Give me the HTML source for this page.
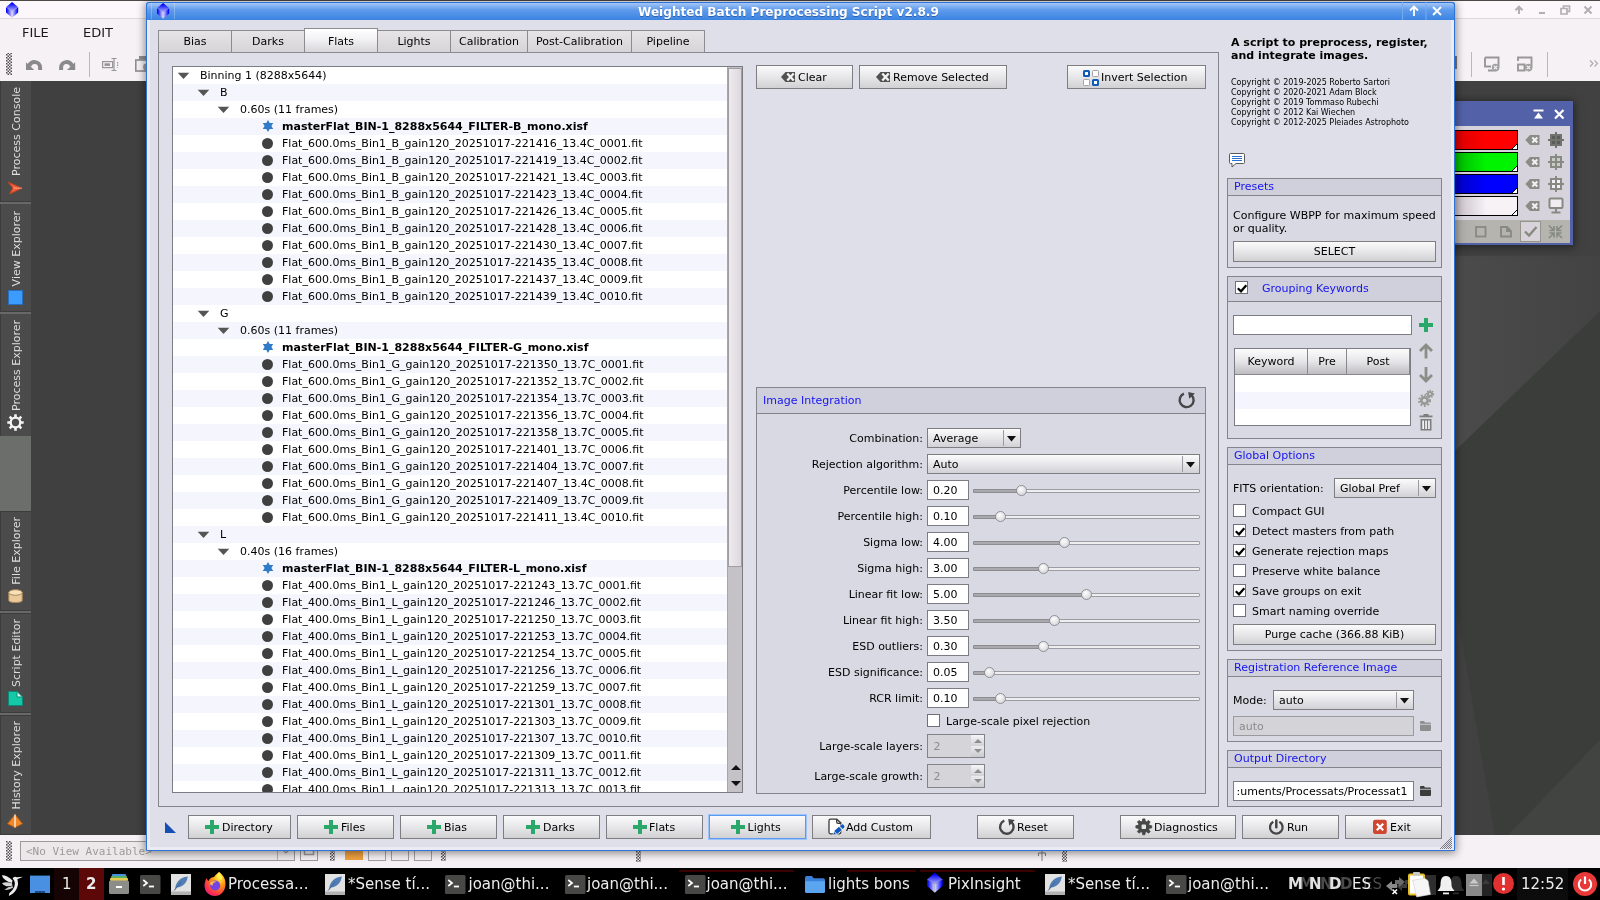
<!DOCTYPE html>
<html lang="en"><head><meta charset="utf-8"><title>Weighted Batch Preprocessing Script v2.8.9</title>
<style>

*{box-sizing:border-box;margin:0;padding:0}
html,body{width:1600px;height:900px;overflow:hidden}
body{position:relative;will-change:transform;background:#404040;font-family:"DejaVu Sans","Liberation Sans",sans-serif;font-size:11px;color:#000;line-height:1}
.a{position:absolute}
.t{position:absolute;white-space:pre;line-height:14px;height:14px;margin-top:1px}
svg{position:absolute;overflow:visible}
/* app */
#apptitle{left:0;top:0;width:1600px;height:19px;background:#fcf7fa;border-top:1px solid #4c4846;border-bottom:1px solid #dfd8dc}
#menubar{left:0;top:19px;width:1600px;height:29px;background:#f6f1f4}
#toolbar{left:0;top:48px;width:1600px;height:33px;background:#f6f1f4}
#sidebar{left:0;top:81px;width:31px;height:754px;background:#3c3c3c}
.stab{position:absolute;left:1px;width:30px;background:#4b4b4b}
.stab span{position:absolute;left:9px;bottom:25px;writing-mode:vertical-rl;transform:rotate(180deg);white-space:pre;font-size:11px;color:#dedede;line-height:14px;width:14px}
#appbottom{left:0;top:835px;width:1600px;height:33px;background:#f6f1f4}
#taskbar{left:0;top:868px;width:1600px;height:32px;background:#000;color:#e8e8e8;font-size:15px}
/* dialog */
#dlg{left:146px;top:2px;width:1309px;height:849px;background:#dfdfe9;border:1px solid #2e74d6;border-radius:3px 3px 0 0;box-shadow:inset 0 0 0 3px #ebebf5,0 1px 9px 1px rgba(0,0,0,.45)}
#dlgtitle{left:146px;top:2px;width:1309px;height:18px;border-radius:3px 3px 0 0;border:1px solid #2e74d6;border-bottom:none;background:linear-gradient(#a4c6f7,#5f9bec 40%,#3a84e2);color:#fff;font-weight:bold;font-size:12px}
.btn{position:absolute;height:24px;border:1px solid #7e7e82;background:linear-gradient(#fbfafb,#e9e8ea 45%,#d1d0d3)}
.btn .t{top:4px}
.grp{position:absolute;border:1px solid #84848b;background:#d9d9e3}
.grph{position:absolute;left:0;top:0;right:0;border-bottom:1px solid #84848b;background:#d0d0dc}
.blue{color:#1414f0}
.inp{position:absolute;background:#fff;border:1px solid #7c7c84}
.cb{position:absolute;width:13px;height:13px;background:#fff;border:1px solid #70707a}
.combo{position:absolute;border:1px solid #7e7e82;background:linear-gradient(#fbfbfb,#e9e9ec 45%,#d2d2d6)}
.tab{position:absolute;top:30px;height:23px;border:1px solid #8c8c90;background:linear-gradient(#e6e4e7,#d6d4d7);text-align:center;line-height:21px}

</style></head>
<body>
<div class="a" id="apptitle"></div>
<svg class="a" style="left:5.9px;top:2px" width="12.200" height="15.800" viewBox="0 0 12.200 15.800"><defs><linearGradient id="pta" x1="0" y1="0" x2="0" y2="1"><stop offset="0.150" stop-color="#0000ff"/><stop offset="1" stop-color="#b8b8f6"/></linearGradient><linearGradient id="pla" x1="0" y1="0" x2="1" y2="0"><stop offset="0.100" stop-color="#0808ff"/><stop offset="1" stop-color="#dcdcfa"/></linearGradient><linearGradient id="pra" x1="0" y1="0" x2="1" y2="0"><stop offset="0" stop-color="#dcdcfa"/><stop offset="0.900" stop-color="#0808ff"/></linearGradient></defs><path d="M0 5.250 L6.100 9 V15.750 L0 10.500 Z" fill="url(#pla)"/><path d="M12.200 5.250 L6.100 9 V15.750 L12.200 10.500 Z" fill="url(#pra)"/><path d="M6.100 0 L12.200 5.250 L6.100 9.300 L0 5.250 Z" fill="url(#pta)"/></svg>
<svg class="a" style="left:1510px;top:2px" width="90" height="16" viewBox="0 0 90 16" fill="none" stroke="#b2aeb1" stroke-width="2">
<path d="M9 12 V5.500 M5.500 8.200 L9 4.700 L12.500 8.200" stroke-width="2.100"/>
<path d="M29 11 H35"/>
<path d="M51 6.500 H57 V12 H51 Z M53.500 6 V4 H59.500 V9.500 H57.500" stroke-width="1.700"/>
<path d="M74.500 4.500 L81.500 11.500 M81.500 4.500 L74.500 11.500"/></svg>
<div class="a" id="menubar"></div>
<div class="t" style="left:22px;top:24px;font-size:13px;line-height:15px;color:#1a1a1a">FILE</div>
<div class="t" style="left:83px;top:24px;font-size:13px;line-height:15px;color:#1a1a1a">EDIT</div>
<div class="a" id="toolbar"></div>
<svg class="a" style="left:0;top:48px" width="146" height="33" viewBox="0 0 146 33">
<defs><pattern id="grip" width="3" height="3" patternUnits="userSpaceOnUse"><rect width="1.500" height="1.500" fill="#505050"/><rect x="1.500" y="1.500" width="1.500" height="1.500" fill="#505050"/></pattern></defs>
<rect x="6" y="5" width="6" height="22" fill="url(#grip)"/>
<path d="M40.100 22 V19.600 A5.600 5.600 0 0 0 29.100 18.200" stroke="#8a8a8a" stroke-width="4" fill="none"/><path d="M26 14.300 V22 H34.300 Z" fill="#8a8a8a"/>
<path d="M61.100 22 V19.600 A5.600 5.600 0 0 1 72.100 18.200" stroke="#8a8a8a" stroke-width="4" fill="none"/><path d="M75.200 14.300 V22 H66.900 Z" fill="#8a8a8a"/>
<rect x="89" y="4" width="1" height="25" fill="#bcb8ba"/>
<g fill="none" stroke="#969696" stroke-width="1.200"><rect x="102.600" y="13.600" width="10" height="6"/><rect x="104.500" y="15.300" width="5.500" height="2.600" fill="#969696" stroke="none"/><path d="M114 10.500 V22.500 M111.500 10.500 H116.500 M111.500 22.500 H116.500"/><path d="M117.600 14 V19.500" stroke-dasharray="1.500 1"/></g>
<g fill="none" stroke="#8e8e8e" stroke-width="1.600"><rect x="135.800" y="12" width="14" height="11"/><rect x="139" y="8" width="10" height="3.500" fill="#8e8e8e" stroke="none"/><circle cx="146.500" cy="19" r="3.500" fill="#a0a0a0" stroke="none"/></g>
</svg>
<svg class="a" style="left:1455px;top:48px" width="145" height="33" viewBox="0 0 145 33" fill="none" stroke="#989898" stroke-width="1.900">
<rect x="16" y="4" width="1" height="25" fill="#bcb8ba" stroke="none"/>
<rect x="92" y="4" width="1" height="25" fill="#bcb8ba" stroke="none"/>
<rect x="0" y="8" width="2" height="13" fill="#7c7c7c" stroke="none"/>
<path d="M30 9.500 H43.500 V19 Q43.500 22.500 40 22.500 H33 M30 9.500 V18.500 H36"/><circle cx="40.500" cy="19.500" r="3.700" fill="#a2a2a2" stroke="none"/><path d="M38.900 17.900 L42.100 21.100 M42.100 17.900 L38.900 21.100" stroke="#f6f1f4" stroke-width="1.200"/>
<path d="M63 13 V9.500 H76.500 V19 Q76.500 22.500 73 22.500"/><rect x="63" y="16.500" width="6.500" height="6"/><circle cx="73.500" cy="19.500" r="3.700" fill="#a2a2a2" stroke="none"/><path d="M71.900 17.900 L75.100 21.100 M75.100 17.900 L71.900 21.100" stroke="#f6f1f4" stroke-width="1.200"/>
<path d="M135 12.500 L138 15.500 L135 18.500 M139.500 12.500 L142.500 15.500 L139.500 18.500" stroke="#aaa" stroke-width="1.100"/>
</svg>
<svg class="a" style="left:1455px;top:81px" width="145" height="754" viewBox="0 0 145 754"><defs><linearGradient id="wsg" x1="0" y1="0" x2="1" y2="0"><stop offset="0" stop-color="#4b4b4c"/><stop offset="1" stop-color="#434344"/></linearGradient></defs>
<rect x="0" y="0" width="145" height="754" fill="#414141"/>
<path d="M0 175 H145 V230 L0 370 Z" fill="url(#wsg)"/>
<path d="M145 230 L0 370 V520 L40 754 H145 Z" fill="#3b3d3b"/>
<path d="M145 659 L53 754 H145 Z" fill="#424442"/>
</svg>
<div class="a" id="sidebar"></div>
<div class="stab" style="top:81px;height:120px"><span>Process Console</span><svg style="left:6px;top:100px" width="16" height="14" viewBox="0 0 16 14"><path d="M1 1 L15 7.200 L2.500 13 L6 7 Z" fill="#f0603a" stroke="#c8401c" stroke-width="1" stroke-linejoin="round"/><path d="M6 7 L15 7.200" stroke="#ffd0c0" stroke-width=".8" opacity=".7"/></svg></div>
<div class="a" style="left:0;top:202px;width:31px;height:2px;background:#686868"></div>
<div class="stab" style="top:204px;height:107px"><span>View Explorer</span><svg style="left:7px;top:86px" width="15" height="15" viewBox="0 0 15 15"><rect x=".5" y=".5" width="14" height="14" fill="#3c9cfc" stroke="#2a6cc0"/></svg></div>
<div class="a" style="left:0;top:312px;width:31px;height:2px;background:#686868"></div>
<div class="stab" style="top:314px;height:122px"><span>Process Explorer</span><svg style="left:6px;top:100px" width="17" height="17" viewBox="0 0 17 17"><circle cx="8.500" cy="8.500" r="4.800" fill="none" stroke="#f4f4f4" stroke-width="2.300"/><g stroke="#f4f4f4" stroke-width="2.600"><path d="M8.500 0.300 V3 M8.500 14 V16.700 M0.300 8.500 H3 M14 8.500 H16.700 M2.700 2.700 L4.600 4.600 M12.400 12.400 L14.300 14.300 M2.700 14.300 L4.600 12.400 M12.400 4.600 L14.300 2.700"/></g></svg></div>
<div class="a" style="left:0;top:436px;width:31px;height:75px;background:#6c6e6c"></div>
<div class="stab" style="top:512px;height:98px"><span>File Explorer</span><svg style="left:7px;top:77px" width="15" height="15" viewBox="0 0 15 15"><path d="M.8 3.500 V11.500 C.8 14.200 14.200 14.200 14.200 11.500 V3.500 Z" fill="#ecc99a" stroke="#a88858"/><ellipse cx="7.500" cy="3.500" rx="6.700" ry="2.800" fill="#f8e0b8" stroke="#a88858"/></svg></div>
<div class="a" style="left:0;top:611px;width:31px;height:2px;background:#686868"></div>
<div class="stab" style="top:614px;height:98px"><span>Script Editor</span><svg style="left:7px;top:77px" width="15" height="15" viewBox="0 0 15 15"><path d="M.5 .5 H9 L14.500 6 V14.500 H.5 Z" fill="#14c8a8" stroke="#0a8a74"/><path d="M9 .5 V6 H14.500 Z" fill="#e0fff6" stroke="#0a8a74"/></svg></div>
<div class="a" style="left:0;top:713px;width:31px;height:2px;background:#686868"></div>
<div class="stab" style="top:716px;height:118px"><span>History Explorer</span><svg style="left:6px;top:98px" width="16" height="14" viewBox="0 0 16 14"><path d="M8 .5 L15.500 9.800 L8 13.500 L.5 9.800 Z" fill="#f08828" stroke="#b85c10"/><path d="M8 .5 V13.500" stroke="#fff" stroke-width="1.200"/></svg></div>
<div class="a" id="appbottom"></div>
<svg class="a" style="left:0;top:835px" width="460" height="33" viewBox="0 0 460 33"><rect x="6" y="6" width="6" height="20" fill="url(#grip)"/>
<rect x="20.500" y="6.500" width="274" height="19" fill="#ece8ea" stroke="#9a9a9a"/>
<path d="M277.500 7 V25" stroke="#b0b0b0"/><path d="M282 14 L286 18 L290 14" fill="none" stroke="#9a9a9a" stroke-width="1.2"/>
<rect x="300.500" y="6.500" width="17" height="19" fill="none" stroke="#9a9a9a"/><rect x="304.500" y="10.500" width="9" height="9" fill="none" stroke="#9a9a9a" stroke-width="1.5"/>
<rect x="330" y="8" width="5" height="18" fill="url(#grip)"/>
<rect x="345" y="8" width="18" height="17" fill="#f0a040"/>
<rect x="368.500" y="8.500" width="17" height="17" fill="none" stroke="#a0a0a0"/><rect x="391.500" y="8.500" width="17" height="17" fill="none" stroke="#a0a0a0"/><rect x="414.500" y="8.500" width="17" height="17" fill="none" stroke="#a0a0a0"/>
<rect x="441" y="8" width="5" height="18" fill="url(#grip)"/></svg>
<div class="t" style="left:26px;top:844px;font-family:'DejaVu Sans Mono','Liberation Mono',monospace;font-size:11px;color:#9a9a9a">&lt;No View Available&gt;</div>
<svg class="a" style="left:1036px;top:851px" width="40" height="12" viewBox="0 0 40 12"><path d="M6 0 V10 M2.500 2 H9.500 M2.500 2 V5 M9.500 2 V5" stroke="#808080" fill="none"/><rect x="26" y="0" width="5" height="11" fill="url(#grip)"/></svg>
<svg class="a" style="left:636px;top:851px" width="6" height="11" viewBox="0 0 6 11"><rect width="5" height="11" fill="url(#grip)"/></svg>
<div class="a" style="left:1440px;top:101px;width:133px;height:144px;background:#5361a8;box-shadow:0 1px 8px 1px rgba(0,0,0,.5)"></div>
<div class="a" style="left:1440px;top:126px;width:130px;height:94px;background:#d7d3dc"></div>
<div class="a" style="left:1440px;top:220px;width:130px;height:23px;background:linear-gradient(90deg,#a8a6a2 1%,#b6b4af 30%)"></div>
<div class="a" style="left:1440px;top:130px;width:78px;height:20px;background:linear-gradient(90deg,#d80000 18%,#ff0000 60%);border:1px solid #000;border-left:none"></div>
<svg class="a" style="left:1512px;top:144px" width="5" height="5" viewBox="0 0 5 5"><path d="M5 0 V5 H0 Z" fill="#fff"/><path d="M0 5 L5 0" stroke="#000" stroke-width="1"/></svg>
<svg class="a" style="left:1525px;top:135px" width="15" height="10" viewBox="0 0 15 10"><path d="M5 0 H14.500 V10 H5 L.3 5 Z" fill="#8a8c86"/><path d="M7.300 2.500 L12.300 7.500 M12.300 2.500 L7.300 7.500" stroke="#f4f0f6" stroke-width="2"/></svg>
<div class="a" style="left:1440px;top:152px;width:78px;height:20px;background:linear-gradient(90deg,#00b400 18%,#00f400 60%);border:1px solid #000;border-left:none"></div>
<svg class="a" style="left:1512px;top:166px" width="5" height="5" viewBox="0 0 5 5"><path d="M5 0 V5 H0 Z" fill="#fff"/><path d="M0 5 L5 0" stroke="#000" stroke-width="1"/></svg>
<svg class="a" style="left:1525px;top:157px" width="15" height="10" viewBox="0 0 15 10"><path d="M5 0 H14.500 V10 H5 L.3 5 Z" fill="#8a8c86"/><path d="M7.300 2.500 L12.300 7.500 M12.300 2.500 L7.300 7.500" stroke="#f4f0f6" stroke-width="2"/></svg>
<div class="a" style="left:1440px;top:174px;width:78px;height:20px;background:linear-gradient(90deg,#0000c0 18%,#0000ff 60%);border:1px solid #000;border-left:none"></div>
<svg class="a" style="left:1512px;top:188px" width="5" height="5" viewBox="0 0 5 5"><path d="M5 0 V5 H0 Z" fill="#fff"/><path d="M0 5 L5 0" stroke="#000" stroke-width="1"/></svg>
<svg class="a" style="left:1525px;top:179px" width="15" height="10" viewBox="0 0 15 10"><path d="M5 0 H14.500 V10 H5 L.3 5 Z" fill="#8a8c86"/><path d="M7.300 2.500 L12.300 7.500 M12.300 2.500 L7.300 7.500" stroke="#f4f0f6" stroke-width="2"/></svg>
<div class="a" style="left:1440px;top:196px;width:78px;height:20px;background:linear-gradient(90deg,#c4bcc4 18%,#f6f2f6 60%);border:1px solid #000;border-left:none"></div>
<svg class="a" style="left:1512px;top:210px" width="5" height="5" viewBox="0 0 5 5"><path d="M5 0 V5 H0 Z" fill="#fff"/><path d="M0 5 L5 0" stroke="#000" stroke-width="1"/></svg>
<svg class="a" style="left:1525px;top:201px" width="15" height="10" viewBox="0 0 15 10"><path d="M5 0 H14.500 V10 H5 L.3 5 Z" fill="#8a8c86"/><path d="M7.300 2.500 L12.300 7.500 M12.300 2.500 L7.300 7.500" stroke="#f4f0f6" stroke-width="2"/></svg>
<svg class="a" style="left:1548px;top:131px" width="16" height="86" viewBox="0 0 16 86" fill="none">
<g stroke="#70746c" stroke-width="2"><rect x="3" y="4" width="10" height="10" fill="#5c5c5c"/><path d="M8 1 V17 M0 9 H16"/></g>
<g stroke="#868a82" stroke-width="2"><rect x="3" y="26" width="10" height="10" fill="#c8ccc4"/><path d="M8 23 V39 M0 31 H16"/></g>
<g stroke="#868a82" stroke-width="2"><rect x="3" y="48" width="10" height="10" fill="#f4f0f6"/><path d="M8 45 V61 M0 53 H16"/></g>
<g stroke="#868a82" stroke-width="2"><rect x="1.500" y="67.500" width="13" height="9.500" rx="1" fill="#f0ecf2"/><path d="M8 77 V81 M3.500 81.500 H12.500"/></g>
</svg>
<svg class="a" style="left:1530px;top:107px" width="38" height="14" viewBox="0 0 38 14" fill="none" stroke="#fff" stroke-width="2"><path d="M3.500 3.500 H13.500" /><path d="M8.500 5.500 L13 11.500 H4 Z" fill="#fff" stroke="none"/><path d="M25 3 L33.500 11.500 M33.500 3 L25 11.500" stroke-width="2.200"/></svg>
<svg class="a" style="left:1470px;top:221px" width="100" height="22" viewBox="0 0 100 22" fill="none" stroke="#868a80" stroke-width="1.800">
<rect x="6" y="6" width="9.500" height="9.500"/>
<path d="M31 6 H37 L41 10 V15.500 H31 Z M37 6 V10 H41"/>
<rect x="50.500" y="0.500" width="20" height="20" fill="#d8d2da" stroke="#94968e" stroke-width="1"/>
<path d="M55 10.500 L59 14.500 L66.500 6" stroke-width="2.400"/>
<path d="M79 4.500 L83.500 9 M84 5 V9.500 H79.500 M92 4.500 L87.500 9 M87 5 V9.500 H91.500 M79 17 L83.500 12.500 M84 16.500 V12 H79.500 M92 17 L87.500 12.500 M87 16.500 V12 H91.500" stroke-width="1.600"/>
</svg>
<div class="a" id="dlg"></div>
<div class="a" id="dlgtitle"></div>
<div class="a" style="left:151px;top:3px;width:1px;height:16px;background:rgba(255,255,255,.25)"></div><div class="a" style="left:174px;top:3px;width:1px;height:16px;background:rgba(255,255,255,.25)"></div>
<svg class="a" style="left:157px;top:2.8px" width="12.200" height="15.800" viewBox="0 0 12.200 15.800"><defs><linearGradient id="ptb" x1="0" y1="0" x2="0" y2="1"><stop offset="0.150" stop-color="#0000ff"/><stop offset="1" stop-color="#b8b8f6"/></linearGradient><linearGradient id="plb" x1="0" y1="0" x2="1" y2="0"><stop offset="0.100" stop-color="#0808ff"/><stop offset="1" stop-color="#dcdcfa"/></linearGradient><linearGradient id="prb" x1="0" y1="0" x2="1" y2="0"><stop offset="0" stop-color="#dcdcfa"/><stop offset="0.900" stop-color="#0808ff"/></linearGradient></defs><path d="M0 5.250 L6.100 9 V15.750 L0 10.500 Z" fill="url(#plb)"/><path d="M12.200 5.250 L6.100 9 V15.750 L12.200 10.500 Z" fill="url(#prb)"/><path d="M6.100 0 L12.200 5.250 L6.100 9.300 L0 5.250 Z" fill="url(#ptb)"/></svg>
<div class="t" style="left:638px;top:4px;font-size:12.1px;font-weight:bold;color:#fff;text-shadow:0 1px 0 rgba(30,60,120,.55);line-height:15px">Weighted Batch Preprocessing Script v2.8.9</div>
<svg class="a" style="left:1402px;top:2px" width="52" height="18" viewBox="0 0 52 18" fill="none" stroke="#fff" stroke-width="1.8">
<path d="M.5 0 V18 M24 0 V18" stroke="#78acf0" stroke-width="1"/>
<path d="M12 14 V5 M8 8.500 L12 4.500 L16 8.500"/>
<path d="M31 5 L39 13 M39 5 L31 13"/></svg>
<div class="a" style="left:158px;top:52px;width:1061px;height:755px;border:1px solid #84848b;border-top:none"></div>
<div class="a" style="left:158px;top:52px;width:1061px;height:1px;background:#84848b"></div>
<div class="tab" style="left:158px;width:74px">Bias</div>
<div class="tab" style="left:231px;width:74px">Darks</div>
<div class="tab" style="left:304px;width:74px;top:28px;height:25px;line-height:25px;background:linear-gradient(#fff,#f2f1f3 45%,#d8d6d9)">Flats</div>
<div class="tab" style="left:377px;width:74px">Lights</div>
<div class="tab" style="left:450px;width:78px">Calibration</div>
<div class="tab" style="left:527px;width:105px">Post-Calibration</div>
<div class="tab" style="left:631px;width:74px">Pipeline</div>
<div class="a" style="left:172px;top:66px;width:571px;height:727px;background:#fff;border:1px solid #7c7c84;overflow:hidden" id="tree">
<svg style="left:5px;top:5px" width="11" height="7" viewBox="0 0 11 7"><path d="M-.3 .8 H11.300 L5.500 7 Z" fill="#555"/></svg>
<div class="t" style="left:27px;top:1px">Binning 1 (8288x5644)</div>
<div class="a" style="left:0;top:17px;width:554px;height:17px;background:#f5f5fd"></div>
<svg style="left:25px;top:22px" width="11" height="7" viewBox="0 0 11 7"><path d="M-.3 .8 H11.300 L5.500 7 Z" fill="#555"/></svg>
<div class="t" style="left:47px;top:18px">B</div>
<svg style="left:45px;top:39px" width="11" height="7" viewBox="0 0 11 7"><path d="M-.3 .8 H11.300 L5.500 7 Z" fill="#555"/></svg>
<div class="t" style="left:67px;top:35px">0.60s (11 frames)</div>
<div class="a" style="left:0;top:51px;width:554px;height:17px;background:#f5f5fd"></div>
<svg style="left:89px;top:53.2px" width="12" height="12" viewBox="0 0 12 12"><path d="M6 0 L7.700 3.100 L11.200 3 L9.400 6 L11.200 9 L7.700 8.900 L6 12 L4.300 8.900 L.8 9 L2.600 6 L.8 3 L4.300 3.100 Z" fill="#2f7bc8"/></svg>
<div class="t" style="left:109px;top:52px;font-weight:bold">masterFlat_BIN-1_8288x5644_FILTER-B_mono.xisf</div>
<div class="a" style="left:89px;top:70.5px;width:11.4px;height:11.4px;border-radius:50%;background:#404040"></div>
<div class="t" style="left:109px;top:69px">Flat_600.0ms_Bin1_B_gain120_20251017-221416_13.4C_0001.fit</div>
<div class="a" style="left:0;top:85px;width:554px;height:17px;background:#f5f5fd"></div>
<div class="a" style="left:89px;top:87.5px;width:11.4px;height:11.4px;border-radius:50%;background:#404040"></div>
<div class="t" style="left:109px;top:86px">Flat_600.0ms_Bin1_B_gain120_20251017-221419_13.4C_0002.fit</div>
<div class="a" style="left:89px;top:104.5px;width:11.4px;height:11.4px;border-radius:50%;background:#404040"></div>
<div class="t" style="left:109px;top:103px">Flat_600.0ms_Bin1_B_gain120_20251017-221421_13.4C_0003.fit</div>
<div class="a" style="left:0;top:119px;width:554px;height:17px;background:#f5f5fd"></div>
<div class="a" style="left:89px;top:121.5px;width:11.4px;height:11.4px;border-radius:50%;background:#404040"></div>
<div class="t" style="left:109px;top:120px">Flat_600.0ms_Bin1_B_gain120_20251017-221423_13.4C_0004.fit</div>
<div class="a" style="left:89px;top:138.5px;width:11.4px;height:11.4px;border-radius:50%;background:#404040"></div>
<div class="t" style="left:109px;top:137px">Flat_600.0ms_Bin1_B_gain120_20251017-221426_13.4C_0005.fit</div>
<div class="a" style="left:0;top:153px;width:554px;height:17px;background:#f5f5fd"></div>
<div class="a" style="left:89px;top:155.5px;width:11.4px;height:11.4px;border-radius:50%;background:#404040"></div>
<div class="t" style="left:109px;top:154px">Flat_600.0ms_Bin1_B_gain120_20251017-221428_13.4C_0006.fit</div>
<div class="a" style="left:89px;top:172.5px;width:11.4px;height:11.4px;border-radius:50%;background:#404040"></div>
<div class="t" style="left:109px;top:171px">Flat_600.0ms_Bin1_B_gain120_20251017-221430_13.4C_0007.fit</div>
<div class="a" style="left:0;top:187px;width:554px;height:17px;background:#f5f5fd"></div>
<div class="a" style="left:89px;top:189.5px;width:11.4px;height:11.4px;border-radius:50%;background:#404040"></div>
<div class="t" style="left:109px;top:188px">Flat_600.0ms_Bin1_B_gain120_20251017-221435_13.4C_0008.fit</div>
<div class="a" style="left:89px;top:206.5px;width:11.4px;height:11.4px;border-radius:50%;background:#404040"></div>
<div class="t" style="left:109px;top:205px">Flat_600.0ms_Bin1_B_gain120_20251017-221437_13.4C_0009.fit</div>
<div class="a" style="left:0;top:221px;width:554px;height:17px;background:#f5f5fd"></div>
<div class="a" style="left:89px;top:223.5px;width:11.4px;height:11.4px;border-radius:50%;background:#404040"></div>
<div class="t" style="left:109px;top:222px">Flat_600.0ms_Bin1_B_gain120_20251017-221439_13.4C_0010.fit</div>
<svg style="left:25px;top:243px" width="11" height="7" viewBox="0 0 11 7"><path d="M-.3 .8 H11.300 L5.500 7 Z" fill="#555"/></svg>
<div class="t" style="left:47px;top:239px">G</div>
<div class="a" style="left:0;top:255px;width:554px;height:17px;background:#f5f5fd"></div>
<svg style="left:45px;top:260px" width="11" height="7" viewBox="0 0 11 7"><path d="M-.3 .8 H11.300 L5.500 7 Z" fill="#555"/></svg>
<div class="t" style="left:67px;top:256px">0.60s (11 frames)</div>
<svg style="left:89px;top:274.2px" width="12" height="12" viewBox="0 0 12 12"><path d="M6 0 L7.700 3.100 L11.200 3 L9.400 6 L11.200 9 L7.700 8.900 L6 12 L4.300 8.900 L.8 9 L2.600 6 L.8 3 L4.300 3.100 Z" fill="#2f7bc8"/></svg>
<div class="t" style="left:109px;top:273px;font-weight:bold">masterFlat_BIN-1_8288x5644_FILTER-G_mono.xisf</div>
<div class="a" style="left:0;top:289px;width:554px;height:17px;background:#f5f5fd"></div>
<div class="a" style="left:89px;top:291.5px;width:11.4px;height:11.4px;border-radius:50%;background:#404040"></div>
<div class="t" style="left:109px;top:290px">Flat_600.0ms_Bin1_G_gain120_20251017-221350_13.7C_0001.fit</div>
<div class="a" style="left:89px;top:308.5px;width:11.4px;height:11.4px;border-radius:50%;background:#404040"></div>
<div class="t" style="left:109px;top:307px">Flat_600.0ms_Bin1_G_gain120_20251017-221352_13.7C_0002.fit</div>
<div class="a" style="left:0;top:323px;width:554px;height:17px;background:#f5f5fd"></div>
<div class="a" style="left:89px;top:325.5px;width:11.4px;height:11.4px;border-radius:50%;background:#404040"></div>
<div class="t" style="left:109px;top:324px">Flat_600.0ms_Bin1_G_gain120_20251017-221354_13.7C_0003.fit</div>
<div class="a" style="left:89px;top:342.5px;width:11.4px;height:11.4px;border-radius:50%;background:#404040"></div>
<div class="t" style="left:109px;top:341px">Flat_600.0ms_Bin1_G_gain120_20251017-221356_13.7C_0004.fit</div>
<div class="a" style="left:0;top:357px;width:554px;height:17px;background:#f5f5fd"></div>
<div class="a" style="left:89px;top:359.5px;width:11.4px;height:11.4px;border-radius:50%;background:#404040"></div>
<div class="t" style="left:109px;top:358px">Flat_600.0ms_Bin1_G_gain120_20251017-221358_13.7C_0005.fit</div>
<div class="a" style="left:89px;top:376.5px;width:11.4px;height:11.4px;border-radius:50%;background:#404040"></div>
<div class="t" style="left:109px;top:375px">Flat_600.0ms_Bin1_G_gain120_20251017-221401_13.7C_0006.fit</div>
<div class="a" style="left:0;top:391px;width:554px;height:17px;background:#f5f5fd"></div>
<div class="a" style="left:89px;top:393.5px;width:11.4px;height:11.4px;border-radius:50%;background:#404040"></div>
<div class="t" style="left:109px;top:392px">Flat_600.0ms_Bin1_G_gain120_20251017-221404_13.7C_0007.fit</div>
<div class="a" style="left:89px;top:410.5px;width:11.4px;height:11.4px;border-radius:50%;background:#404040"></div>
<div class="t" style="left:109px;top:409px">Flat_600.0ms_Bin1_G_gain120_20251017-221407_13.4C_0008.fit</div>
<div class="a" style="left:0;top:425px;width:554px;height:17px;background:#f5f5fd"></div>
<div class="a" style="left:89px;top:427.5px;width:11.4px;height:11.4px;border-radius:50%;background:#404040"></div>
<div class="t" style="left:109px;top:426px">Flat_600.0ms_Bin1_G_gain120_20251017-221409_13.7C_0009.fit</div>
<div class="a" style="left:89px;top:444.5px;width:11.4px;height:11.4px;border-radius:50%;background:#404040"></div>
<div class="t" style="left:109px;top:443px">Flat_600.0ms_Bin1_G_gain120_20251017-221411_13.4C_0010.fit</div>
<div class="a" style="left:0;top:459px;width:554px;height:17px;background:#f5f5fd"></div>
<svg style="left:25px;top:464px" width="11" height="7" viewBox="0 0 11 7"><path d="M-.3 .8 H11.300 L5.500 7 Z" fill="#555"/></svg>
<div class="t" style="left:47px;top:460px">L</div>
<svg style="left:45px;top:481px" width="11" height="7" viewBox="0 0 11 7"><path d="M-.3 .8 H11.300 L5.500 7 Z" fill="#555"/></svg>
<div class="t" style="left:67px;top:477px">0.40s (16 frames)</div>
<div class="a" style="left:0;top:493px;width:554px;height:17px;background:#f5f5fd"></div>
<svg style="left:89px;top:495.2px" width="12" height="12" viewBox="0 0 12 12"><path d="M6 0 L7.700 3.100 L11.200 3 L9.400 6 L11.200 9 L7.700 8.900 L6 12 L4.300 8.900 L.8 9 L2.600 6 L.8 3 L4.300 3.100 Z" fill="#2f7bc8"/></svg>
<div class="t" style="left:109px;top:494px;font-weight:bold">masterFlat_BIN-1_8288x5644_FILTER-L_mono.xisf</div>
<div class="a" style="left:89px;top:512.5px;width:11.4px;height:11.4px;border-radius:50%;background:#404040"></div>
<div class="t" style="left:109px;top:511px">Flat_400.0ms_Bin1_L_gain120_20251017-221243_13.7C_0001.fit</div>
<div class="a" style="left:0;top:527px;width:554px;height:17px;background:#f5f5fd"></div>
<div class="a" style="left:89px;top:529.5px;width:11.4px;height:11.4px;border-radius:50%;background:#404040"></div>
<div class="t" style="left:109px;top:528px">Flat_400.0ms_Bin1_L_gain120_20251017-221246_13.7C_0002.fit</div>
<div class="a" style="left:89px;top:546.5px;width:11.4px;height:11.4px;border-radius:50%;background:#404040"></div>
<div class="t" style="left:109px;top:545px">Flat_400.0ms_Bin1_L_gain120_20251017-221250_13.7C_0003.fit</div>
<div class="a" style="left:0;top:561px;width:554px;height:17px;background:#f5f5fd"></div>
<div class="a" style="left:89px;top:563.5px;width:11.4px;height:11.4px;border-radius:50%;background:#404040"></div>
<div class="t" style="left:109px;top:562px">Flat_400.0ms_Bin1_L_gain120_20251017-221253_13.7C_0004.fit</div>
<div class="a" style="left:89px;top:580.5px;width:11.4px;height:11.4px;border-radius:50%;background:#404040"></div>
<div class="t" style="left:109px;top:579px">Flat_400.0ms_Bin1_L_gain120_20251017-221254_13.7C_0005.fit</div>
<div class="a" style="left:0;top:595px;width:554px;height:17px;background:#f5f5fd"></div>
<div class="a" style="left:89px;top:597.5px;width:11.4px;height:11.4px;border-radius:50%;background:#404040"></div>
<div class="t" style="left:109px;top:596px">Flat_400.0ms_Bin1_L_gain120_20251017-221256_13.7C_0006.fit</div>
<div class="a" style="left:89px;top:614.5px;width:11.4px;height:11.4px;border-radius:50%;background:#404040"></div>
<div class="t" style="left:109px;top:613px">Flat_400.0ms_Bin1_L_gain120_20251017-221259_13.7C_0007.fit</div>
<div class="a" style="left:0;top:629px;width:554px;height:17px;background:#f5f5fd"></div>
<div class="a" style="left:89px;top:631.5px;width:11.4px;height:11.4px;border-radius:50%;background:#404040"></div>
<div class="t" style="left:109px;top:630px">Flat_400.0ms_Bin1_L_gain120_20251017-221301_13.7C_0008.fit</div>
<div class="a" style="left:89px;top:648.5px;width:11.4px;height:11.4px;border-radius:50%;background:#404040"></div>
<div class="t" style="left:109px;top:647px">Flat_400.0ms_Bin1_L_gain120_20251017-221303_13.7C_0009.fit</div>
<div class="a" style="left:0;top:663px;width:554px;height:17px;background:#f5f5fd"></div>
<div class="a" style="left:89px;top:665.5px;width:11.4px;height:11.4px;border-radius:50%;background:#404040"></div>
<div class="t" style="left:109px;top:664px">Flat_400.0ms_Bin1_L_gain120_20251017-221307_13.7C_0010.fit</div>
<div class="a" style="left:89px;top:682.5px;width:11.4px;height:11.4px;border-radius:50%;background:#404040"></div>
<div class="t" style="left:109px;top:681px">Flat_400.0ms_Bin1_L_gain120_20251017-221309_13.7C_0011.fit</div>
<div class="a" style="left:0;top:697px;width:554px;height:17px;background:#f5f5fd"></div>
<div class="a" style="left:89px;top:699.5px;width:11.4px;height:11.4px;border-radius:50%;background:#404040"></div>
<div class="t" style="left:109px;top:698px">Flat_400.0ms_Bin1_L_gain120_20251017-221311_13.7C_0012.fit</div>
<div class="a" style="left:89px;top:716.5px;width:11.4px;height:11.4px;border-radius:50%;background:#404040"></div>
<div class="t" style="left:109px;top:715px">Flat_400.0ms_Bin1_L_gain120_20251017-221313_13.7C_0013.fit</div>
<div class="a" style="left:554px;top:0;width:16px;height:725px;background:#c4c2c6;border-left:1px solid #a8a6aa"></div>
<div class="a" style="left:555px;top:1px;width:14px;height:499px;background:linear-gradient(90deg,#eeeaee,#dcd8dc);border:1px solid #a09ea2"></div>
<svg style="left:558px;top:697px" width="10" height="24" viewBox="0 0 10 24"><path d="M0 6 H10 L5 1 Z M0 17 H10 L5 22 Z" fill="#111"/></svg>
</div>
<div class="btn" style="left:756px;top:65px;width:97px"><svg style="left:24px;top:6px" width="14" height="10" viewBox="0 0 14 10"><path d="M4.500 0 H14 V10 H4.500 L0 5 Z" fill="#50524f"/><path d="M6.300 1.500 L12.700 8.500 M12.700 1.500 L6.300 8.500" stroke="#f4f2f4" stroke-width="2.300"/></svg><div class="t" style="left:41px">Clear</div></div>
<div class="btn" style="left:859px;top:65px;width:148px"><svg style="left:16px;top:6px" width="14" height="10" viewBox="0 0 14 10"><path d="M4.500 0 H14 V10 H4.500 L0 5 Z" fill="#50524f"/><path d="M6.300 1.500 L12.700 8.500 M12.700 1.500 L6.300 8.500" stroke="#f4f2f4" stroke-width="2.300"/></svg><div class="t" style="left:33px">Remove Selected</div></div>
<div class="btn" style="left:1067px;top:65px;width:139px"><svg style="left:15px;top:3.500px" width="16" height="16" viewBox="0 0 16 16"><rect x="1" y="1" width="5" height="5" rx=".6" fill="#fff" stroke="#0f5bb8" stroke-width="2"/><rect x="10" y="10" width="5" height="5" rx=".6" fill="#fff" stroke="#0f5bb8" stroke-width="2"/><rect x="9.500" y=".5" width="6" height="6" rx=".8" fill="#fff" stroke="#a4a4a4" stroke-width="1"/><rect x=".5" y="9.500" width="6" height="6" rx=".8" fill="#fff" stroke="#a4a4a4" stroke-width="1"/></svg><div class="t" style="left:33px">Invert Selection</div></div>
<div class="grp" style="left:756px;top:387px;width:450px;height:407px"><div class="grph" style="height:26px"></div></div>
<div class="t blue" style="left:763px;top:393px">Image Integration</div>
<svg class="a" style="left:1170px;top:384px" width="40" height="30" viewBox="0 0 40 30"><path d="M13.900 9.700 A7 7 0 1 0 21.500 11.100" fill="none" stroke="#464648" stroke-width="2.400"/><path d="M18.200 8.100 L24.900 9.400 L19.200 14.800 Z" fill="#464648"/></svg>
<div class="t" style="left:723px;width:200px;text-align:right;top:431px">Combination:</div>
<div class="combo" style="left:927px;top:428px;width:94px;height:20px"><div class="t" style="left:5px;top:2px">Average</div><div class="a" style="left:75px;top:1px;width:1px;height:16px;background:#9a9aa0"></div><svg style="left:79px;top:6.5px" width="9" height="5.500" viewBox="0 0 9 5.500"><path d="M0 0 H9 L4.500 5.500 Z" fill="#111"/></svg></div>
<div class="t" style="left:723px;width:200px;text-align:right;top:457px">Rejection algorithm:</div>
<div class="combo" style="left:927px;top:454px;width:273px;height:20px"><div class="t" style="left:5px;top:2px">Auto</div><div class="a" style="left:254px;top:1px;width:1px;height:16px;background:#9a9aa0"></div><svg style="left:258px;top:6.5px" width="9" height="5.500" viewBox="0 0 9 5.500"><path d="M0 0 H9 L4.500 5.500 Z" fill="#111"/></svg></div>
<div class="t" style="left:723px;width:200px;text-align:right;top:483px">Percentile low:</div>
<div class="inp" style="left:927px;top:480px;width:42px;height:20px"><div class="t" style="left:5px;top:2px">0.20</div></div>
<div class="a" style="left:973px;top:489px;width:227px;height:4px;border:1px solid #9c9ca2;background:#eeeef2;border-radius:1px"></div>
<div class="a" style="left:973px;top:489px;width:48px;height:4px;border:1px solid #8c8c90;background:#aaaaae;border-radius:1px"></div>
<div class="a" style="left:1016px;top:485px;width:11px;height:11px;border-radius:50%;border:1px solid #8e8e94;background:radial-gradient(circle at 40% 35%,#fdfdfd,#dcdce0 70%,#c4c4ca)"></div>
<div class="t" style="left:723px;width:200px;text-align:right;top:509px">Percentile high:</div>
<div class="inp" style="left:927px;top:506px;width:42px;height:20px"><div class="t" style="left:5px;top:2px">0.10</div></div>
<div class="a" style="left:973px;top:515px;width:227px;height:4px;border:1px solid #9c9ca2;background:#eeeef2;border-radius:1px"></div>
<div class="a" style="left:973px;top:515px;width:27px;height:4px;border:1px solid #8c8c90;background:#aaaaae;border-radius:1px"></div>
<div class="a" style="left:995px;top:511px;width:11px;height:11px;border-radius:50%;border:1px solid #8e8e94;background:radial-gradient(circle at 40% 35%,#fdfdfd,#dcdce0 70%,#c4c4ca)"></div>
<div class="t" style="left:723px;width:200px;text-align:right;top:535px">Sigma low:</div>
<div class="inp" style="left:927px;top:532px;width:42px;height:20px"><div class="t" style="left:5px;top:2px">4.00</div></div>
<div class="a" style="left:973px;top:541px;width:227px;height:4px;border:1px solid #9c9ca2;background:#eeeef2;border-radius:1px"></div>
<div class="a" style="left:973px;top:541px;width:91px;height:4px;border:1px solid #8c8c90;background:#aaaaae;border-radius:1px"></div>
<div class="a" style="left:1059px;top:537px;width:11px;height:11px;border-radius:50%;border:1px solid #8e8e94;background:radial-gradient(circle at 40% 35%,#fdfdfd,#dcdce0 70%,#c4c4ca)"></div>
<div class="t" style="left:723px;width:200px;text-align:right;top:561px">Sigma high:</div>
<div class="inp" style="left:927px;top:558px;width:42px;height:20px"><div class="t" style="left:5px;top:2px">3.00</div></div>
<div class="a" style="left:973px;top:567px;width:227px;height:4px;border:1px solid #9c9ca2;background:#eeeef2;border-radius:1px"></div>
<div class="a" style="left:973px;top:567px;width:70px;height:4px;border:1px solid #8c8c90;background:#aaaaae;border-radius:1px"></div>
<div class="a" style="left:1038px;top:563px;width:11px;height:11px;border-radius:50%;border:1px solid #8e8e94;background:radial-gradient(circle at 40% 35%,#fdfdfd,#dcdce0 70%,#c4c4ca)"></div>
<div class="t" style="left:723px;width:200px;text-align:right;top:587px">Linear fit low:</div>
<div class="inp" style="left:927px;top:584px;width:42px;height:20px"><div class="t" style="left:5px;top:2px">5.00</div></div>
<div class="a" style="left:973px;top:593px;width:227px;height:4px;border:1px solid #9c9ca2;background:#eeeef2;border-radius:1px"></div>
<div class="a" style="left:973px;top:593px;width:113px;height:4px;border:1px solid #8c8c90;background:#aaaaae;border-radius:1px"></div>
<div class="a" style="left:1081px;top:589px;width:11px;height:11px;border-radius:50%;border:1px solid #8e8e94;background:radial-gradient(circle at 40% 35%,#fdfdfd,#dcdce0 70%,#c4c4ca)"></div>
<div class="t" style="left:723px;width:200px;text-align:right;top:613px">Linear fit high:</div>
<div class="inp" style="left:927px;top:610px;width:42px;height:20px"><div class="t" style="left:5px;top:2px">3.50</div></div>
<div class="a" style="left:973px;top:619px;width:227px;height:4px;border:1px solid #9c9ca2;background:#eeeef2;border-radius:1px"></div>
<div class="a" style="left:973px;top:619px;width:81px;height:4px;border:1px solid #8c8c90;background:#aaaaae;border-radius:1px"></div>
<div class="a" style="left:1049px;top:615px;width:11px;height:11px;border-radius:50%;border:1px solid #8e8e94;background:radial-gradient(circle at 40% 35%,#fdfdfd,#dcdce0 70%,#c4c4ca)"></div>
<div class="t" style="left:723px;width:200px;text-align:right;top:639px">ESD outliers:</div>
<div class="inp" style="left:927px;top:636px;width:42px;height:20px"><div class="t" style="left:5px;top:2px">0.30</div></div>
<div class="a" style="left:973px;top:645px;width:227px;height:4px;border:1px solid #9c9ca2;background:#eeeef2;border-radius:1px"></div>
<div class="a" style="left:973px;top:645px;width:70px;height:4px;border:1px solid #8c8c90;background:#aaaaae;border-radius:1px"></div>
<div class="a" style="left:1038px;top:641px;width:11px;height:11px;border-radius:50%;border:1px solid #8e8e94;background:radial-gradient(circle at 40% 35%,#fdfdfd,#dcdce0 70%,#c4c4ca)"></div>
<div class="t" style="left:723px;width:200px;text-align:right;top:665px">ESD significance:</div>
<div class="inp" style="left:927px;top:662px;width:42px;height:20px"><div class="t" style="left:5px;top:2px">0.05</div></div>
<div class="a" style="left:973px;top:671px;width:227px;height:4px;border:1px solid #9c9ca2;background:#eeeef2;border-radius:1px"></div>
<div class="a" style="left:973px;top:671px;width:16px;height:4px;border:1px solid #8c8c90;background:#aaaaae;border-radius:1px"></div>
<div class="a" style="left:984px;top:667px;width:11px;height:11px;border-radius:50%;border:1px solid #8e8e94;background:radial-gradient(circle at 40% 35%,#fdfdfd,#dcdce0 70%,#c4c4ca)"></div>
<div class="t" style="left:723px;width:200px;text-align:right;top:691px">RCR limit:</div>
<div class="inp" style="left:927px;top:688px;width:42px;height:20px"><div class="t" style="left:5px;top:2px">0.10</div></div>
<div class="a" style="left:973px;top:697px;width:227px;height:4px;border:1px solid #9c9ca2;background:#eeeef2;border-radius:1px"></div>
<div class="a" style="left:973px;top:697px;width:27px;height:4px;border:1px solid #8c8c90;background:#aaaaae;border-radius:1px"></div>
<div class="a" style="left:995px;top:693px;width:11px;height:11px;border-radius:50%;border:1px solid #8e8e94;background:radial-gradient(circle at 40% 35%,#fdfdfd,#dcdce0 70%,#c4c4ca)"></div>
<div class="cb" style="left:927px;top:714px"></div>
<div class="t" style="left:946px;top:714px">Large-scale pixel rejection</div>
<div class="t" style="left:723px;width:200px;text-align:right;top:739px">Large-scale layers:</div>
<div class="a" style="left:927px;top:734px;width:58px;height:24px;border:1px solid #828288;background:#d5d5d9"><div class="t" style="left:5.500px;top:4px;color:#8c8c90">2</div><div class="a" style="left:43px;top:0;width:13px;height:11px;background:linear-gradient(#f6f6f8,#d2d2d6)"></div><div class="a" style="left:43px;top:11px;width:13px;height:11px;background:linear-gradient(#ededf0,#cacace)"></div><svg style="left:45.500px;top:3px" width="8" height="16" viewBox="0 0 8 16"><path d="M0 5 H8 L4 1 Z M0 11 H8 L4 15 Z" fill="#8e8e92"/></svg></div>
<div class="t" style="left:723px;width:200px;text-align:right;top:769px">Large-scale growth:</div>
<div class="a" style="left:927px;top:764px;width:58px;height:24px;border:1px solid #828288;background:#d5d5d9"><div class="t" style="left:5.500px;top:4px;color:#8c8c90">2</div><div class="a" style="left:43px;top:0;width:13px;height:11px;background:linear-gradient(#f6f6f8,#d2d2d6)"></div><div class="a" style="left:43px;top:11px;width:13px;height:11px;background:linear-gradient(#ededf0,#cacace)"></div><svg style="left:45.500px;top:3px" width="8" height="16" viewBox="0 0 8 16"><path d="M0 5 H8 L4 1 Z M0 11 H8 L4 15 Z" fill="#8e8e92"/></svg></div>
<svg class="a" style="left:165px;top:822px" width="11" height="11" viewBox="0 0 11 11"><path d="M0 0 L11 11 H0 Z" fill="#1450b4"/></svg>
<div class="btn" style="left:188px;top:815px;width:103px"><svg style="left:16px;top:4px" width="14" height="14" viewBox="0 0 14 14"><path d="M5 0 H9 V5 H14 V9 H9 V14 H5 V9 H0 V5 H5 Z" fill="#2aa86a"/></svg><div class="t" style="left:33px">Directory</div></div>
<div class="btn" style="left:297px;top:815px;width:97px"><svg style="left:26px;top:4px" width="14" height="14" viewBox="0 0 14 14"><path d="M5 0 H9 V5 H14 V9 H9 V14 H5 V9 H0 V5 H5 Z" fill="#2aa86a"/></svg><div class="t" style="left:43px">Files</div></div>
<div class="btn" style="left:400px;top:815px;width:97px"><svg style="left:26px;top:4px" width="14" height="14" viewBox="0 0 14 14"><path d="M5 0 H9 V5 H14 V9 H9 V14 H5 V9 H0 V5 H5 Z" fill="#2aa86a"/></svg><div class="t" style="left:43px">Bias</div></div>
<div class="btn" style="left:503px;top:815px;width:97px"><svg style="left:22px;top:4px" width="14" height="14" viewBox="0 0 14 14"><path d="M5 0 H9 V5 H14 V9 H9 V14 H5 V9 H0 V5 H5 Z" fill="#2aa86a"/></svg><div class="t" style="left:39px">Darks</div></div>
<div class="btn" style="left:606px;top:815px;width:97px"><svg style="left:25.5px;top:4px" width="14" height="14" viewBox="0 0 14 14"><path d="M5 0 H9 V5 H14 V9 H9 V14 H5 V9 H0 V5 H5 Z" fill="#2aa86a"/></svg><div class="t" style="left:42px">Flats</div></div>
<div class="btn" style="left:709px;top:815px;width:97px;border:1px solid #5a9af0;box-shadow:0 0 0 1px #9cc4fa"><svg style="left:20.5px;top:4px" width="14" height="14" viewBox="0 0 14 14"><path d="M5 0 H9 V5 H14 V9 H9 V14 H5 V9 H0 V5 H5 Z" fill="#2aa86a"/></svg><div class="t" style="left:37.5px">Lights</div></div>
<div class="btn" style="left:812px;top:815px;width:119px"><svg style="left:0;top:0" width="40" height="22" viewBox="0 0 40 22"><path d="M17.500 3.200 H23.700 L27.800 6.900 V16.300 Q27.800 17.800 26.300 17.800 H17.500 Q16 17.800 16 16.300 V4.700 Q16 3.200 17.500 3.200 Z" fill="#fff" stroke="#3a3a3a" stroke-width="1.300"/><path d="M23.700 3.200 V6 Q23.700 7.300 25 7.300 H27.800" fill="none" stroke="#3a3a3a" stroke-width="1.300"/><g transform="translate(20.200 18.700) rotate(-41.500)" fill="#0f58c0" stroke="#f4f0ea" stroke-width="1.200" paint-order="stroke"><path d="M0 0 L2.800 -1.500 V1.500 Z"/><rect x="3.300" y="-2.100" width="6.300" height="4.200"/><path d="M10.800 -2.100 H12.300 Q14.300 -2.100 14.300 0 Q14.300 2.100 12.300 2.100 H10.800 Z"/></g></svg><div class="t" style="left:33px">Add Custom</div></div>
<div class="btn" style="left:977px;top:815px;width:97px"><svg style="left:0;top:0" width="40" height="22" viewBox="0 0 40 22"><path d="M26.300 4.700 A6.750 6.750 0 1 0 33.300 5.900" fill="none" stroke="#454548" stroke-width="2.400"/><path d="M30.200 3.100 L36.800 4 L31.200 9.800 Z" fill="#454548"/></svg><div class="t" style="left:39px">Reset</div></div>
<div class="btn" style="left:1120px;top:815px;width:116px"><svg style="left:0;top:0" width="40" height="22" viewBox="0 0 40 22"><path d="M21.32 5.29 L21.69 2.88 L23.91 2.88 L24.28 5.29 L25.65 5.86 L27.61 4.41 L29.19 5.99 L27.74 7.95 L28.31 9.32 L30.72 9.69 L30.72 11.91 L28.31 12.28 L27.74 13.65 L29.19 15.61 L27.61 17.19 L25.65 15.74 L24.28 16.31 L23.91 18.72 L21.69 18.72 L21.32 16.31 L19.95 15.74 L17.99 17.19 L16.41 15.61 L17.86 13.65 L17.29 12.28 L14.88 11.91 L14.88 9.69 L17.29 9.32 L17.86 7.95 L16.41 5.99 L17.99 4.41 L19.95 5.86 Z" fill="#464846" stroke="#464846" stroke-width=".8" stroke-linejoin="round"/><rect x="20.600" y="8.600" width="4.400" height="4.400" rx=".8" fill="#e6e6ea"/></svg><div class="t" style="left:33px">Diagnostics</div></div>
<div class="btn" style="left:1242px;top:815px;width:97px"><svg style="left:0;top:0" width="44" height="22" viewBox="0 0 44 22"><path d="M30.300 5.700 A6.300 6.300 0 1 0 36.300 5.700" fill="none" stroke="#454545" stroke-width="2.300"/><path d="M33.300 4.400 V11.300" stroke="#454545" stroke-width="2.500" stroke-linecap="round"/></svg><div class="t" style="left:44px">Run</div></div>
<div class="btn" style="left:1345px;top:815px;width:97px"><svg style="left:0;top:0" width="44" height="22" viewBox="0 0 44 22"><rect x="27" y="3.800" width="13.800" height="14.200" rx="2.200" fill="#d1462f"/><path d="M30.800 7.700 L37.200 14.300 M37.200 7.700 L30.800 14.300" stroke="#fff" stroke-width="2.200"/></svg><div class="t" style="left:44px">Exit</div></div>
<svg class="a" style="left:1440px;top:837px" width="12" height="12" viewBox="0 0 12 12"><rect x="11" y="0" width="1" height="1" fill="#7a7a84"/><rect x="10" y="1" width="1" height="1" fill="#7a7a84"/><rect x="9" y="2" width="1" height="1" fill="#7a7a84"/><rect x="11" y="2" width="1" height="1" fill="#7a7a84"/><rect x="8" y="3" width="1" height="1" fill="#7a7a84"/><rect x="10" y="3" width="1" height="1" fill="#7a7a84"/><rect x="7" y="4" width="1" height="1" fill="#7a7a84"/><rect x="9" y="4" width="1" height="1" fill="#7a7a84"/><rect x="11" y="4" width="1" height="1" fill="#7a7a84"/><rect x="6" y="5" width="1" height="1" fill="#7a7a84"/><rect x="8" y="5" width="1" height="1" fill="#7a7a84"/><rect x="10" y="5" width="1" height="1" fill="#7a7a84"/><rect x="5" y="6" width="1" height="1" fill="#7a7a84"/><rect x="7" y="6" width="1" height="1" fill="#7a7a84"/><rect x="9" y="6" width="1" height="1" fill="#7a7a84"/><rect x="11" y="6" width="1" height="1" fill="#7a7a84"/><rect x="4" y="7" width="1" height="1" fill="#7a7a84"/><rect x="6" y="7" width="1" height="1" fill="#7a7a84"/><rect x="8" y="7" width="1" height="1" fill="#7a7a84"/><rect x="10" y="7" width="1" height="1" fill="#7a7a84"/><rect x="3" y="8" width="1" height="1" fill="#7a7a84"/><rect x="5" y="8" width="1" height="1" fill="#7a7a84"/><rect x="7" y="8" width="1" height="1" fill="#7a7a84"/><rect x="9" y="8" width="1" height="1" fill="#7a7a84"/><rect x="11" y="8" width="1" height="1" fill="#7a7a84"/><rect x="2" y="9" width="1" height="1" fill="#7a7a84"/><rect x="4" y="9" width="1" height="1" fill="#7a7a84"/><rect x="6" y="9" width="1" height="1" fill="#7a7a84"/><rect x="8" y="9" width="1" height="1" fill="#7a7a84"/><rect x="10" y="9" width="1" height="1" fill="#7a7a84"/><rect x="1" y="10" width="1" height="1" fill="#7a7a84"/><rect x="3" y="10" width="1" height="1" fill="#7a7a84"/><rect x="5" y="10" width="1" height="1" fill="#7a7a84"/><rect x="7" y="10" width="1" height="1" fill="#7a7a84"/><rect x="9" y="10" width="1" height="1" fill="#7a7a84"/><rect x="11" y="10" width="1" height="1" fill="#7a7a84"/><rect x="0" y="11" width="1" height="1" fill="#7a7a84"/><rect x="2" y="11" width="1" height="1" fill="#7a7a84"/><rect x="4" y="11" width="1" height="1" fill="#7a7a84"/><rect x="6" y="11" width="1" height="1" fill="#7a7a84"/><rect x="8" y="11" width="1" height="1" fill="#7a7a84"/><rect x="10" y="11" width="1" height="1" fill="#7a7a84"/></svg>
<div class="t" style="left:1231px;top:35px;font-weight:bold;line-height:13px;height:auto">A script to preprocess, register,
and integrate images.</div>
<div class="t" style="left:1231px;top:77px;font-size:8px;line-height:10px;height:10px">Copyright © 2019-2025 Roberto Sartori</div>
<div class="t" style="left:1231px;top:87px;font-size:8px;line-height:10px;height:10px">Copyright © 2020-2021 Adam Block</div>
<div class="t" style="left:1231px;top:97px;font-size:8px;line-height:10px;height:10px">Copyright © 2019 Tommaso Rubechi</div>
<div class="t" style="left:1231px;top:107px;font-size:8px;line-height:10px;height:10px">Copyright © 2012 Kai Wiechen</div>
<div class="t" style="left:1231px;top:117px;font-size:8px;line-height:10px;height:10px">Copyright © 2012-2025 Pleiades Astrophoto</div>
<svg class="a" style="left:1229px;top:153px" width="16" height="15" viewBox="0 0 16 15"><path d="M1.500 .5 H14.500 Q15.500 .5 15.500 1.500 V9.500 Q15.500 10.500 14.500 10.500 H7 L3 14 V10.500 H1.500 Q.5 10.500 .5 9.500 V1.500 Q.5 .5 1.500 .5 Z" fill="#fff" stroke="#5a5a5a"/><path d="M3 3.500 H13 M3 5.500 H13 M3 7.500 H13" stroke="#2a70d0"/></svg>
<div class="grp" style="left:1227px;top:178px;width:215px;height:90px"><div class="grph" style="height:17px"></div></div>
<div class="t blue" style="left:1234px;top:179px">Presets</div>
<div class="t" style="left:1233px;top:208px;line-height:13px;height:auto">Configure WBPP for maximum speed
or quality.</div>
<div class="btn" style="left:1233px;top:241px;width:203px;height:21px"><div class="t" style="left:0;width:201px;text-align:center;top:2px">SELECT</div></div>
<div class="grp" style="left:1227px;top:276px;width:215px;height:163px"><div class="grph" style="height:25px"></div></div>
<div class="t blue" style="left:1262px;top:281px">Grouping Keywords</div>
<div class="cb" style="left:1235px;top:281px"><svg style="left:1px;top:1px" width="10" height="10" viewBox="0 0 10 10"><path d="M.8 5.200 L4 8.300 L9.300 2.200" fill="none" stroke="#000" stroke-width="2.200"/></svg></div>
<div class="inp" style="left:1233px;top:315px;width:179px;height:20px"></div>
<svg class="a" style="left:1419px;top:318px" width="14" height="14" viewBox="0 0 14 14"><path d="M5 0 H9 V5 H14 V9 H9 V14 H5 V9 H0 V5 H5 Z" fill="#2aa86a"/></svg>
<div class="a" style="left:1234px;top:348px;width:177px;height:78px;background:#fff;border:1px solid #7c7c84"><div class="a" style="left:0;top:43px;width:175px;height:17px;background:#f5f5fd"></div></div>
<div class="a" style="left:1235px;top:349px;width:73px;height:26px;background:linear-gradient(#fcfcfc,#e6e5e8 50%,#bebcc0);border-right:1px solid #88888c;border-bottom:1px solid #88888c;text-align:center;line-height:26px">Keyword</div>
<div class="a" style="left:1308px;top:349px;width:39px;height:26px;background:linear-gradient(#fcfcfc,#e6e5e8 50%,#bebcc0);border-right:1px solid #88888c;border-bottom:1px solid #88888c;text-align:center;line-height:26px">Pre</div>
<div class="a" style="left:1347px;top:349px;width:63px;height:26px;background:linear-gradient(#fcfcfc,#e6e5e8 50%,#bebcc0);border-right:1px solid #88888c;border-bottom:1px solid #88888c;text-align:center;line-height:26px">Post</div>
<svg class="a" style="left:1418px;top:342px" width="16" height="92" viewBox="0 0 16 92" fill="none" stroke="#8a8e86" stroke-width="2.800">
<path d="M8 16.500 V3.500 M2 9 L8 3 L14 9"/>
<path d="M8 25 V38.500 M2 33 L8 39 L14 33"/>
<g stroke="none" fill="#969a94"><circle cx="6.500" cy="58.500" r="4.500"/><circle cx="12" cy="52" r="3"/></g>
<g stroke="#969a94" stroke-width="2" stroke-dasharray="1.800 1.800"><circle cx="6.500" cy="58.500" r="5.500"/><circle cx="12" cy="52" r="3.500" stroke-width="1.500" stroke-dasharray="1.300 1.300"/></g>
<circle cx="6.500" cy="58.500" r="1.800" fill="#d9d9e3" stroke="none"/><circle cx="12" cy="52" r="1.100" fill="#d9d9e3" stroke="none"/>
<g stroke="none" fill="#7e7e7e"><rect x="1.500" y="73.500" width="13" height="1.800"/><rect x="5.500" y="72" width="5" height="2"/><rect x="2.500" y="77" width="11" height="11.500"/></g>
<g stroke="none" fill="#f4f4f8"><rect x="4.300" y="78.500" width="1.700" height="8.500"/><rect x="7.200" y="78.500" width="1.700" height="8.500"/><rect x="10.100" y="78.500" width="1.700" height="8.500"/></g>
</svg>
<div class="grp" style="left:1227px;top:447px;width:215px;height:204px"><div class="grph" style="height:17px"></div></div>
<div class="t blue" style="left:1234px;top:448px">Global Options</div>
<div class="t" style="left:1233px;top:481px">FITS orientation:</div>
<div class="combo" style="left:1334px;top:478px;width:102px;height:20px"><div class="t" style="left:5px;top:2px">Global Pref</div><div class="a" style="left:83px;top:1px;width:1px;height:16px;background:#9a9aa0"></div><svg style="left:87px;top:6.5px" width="9" height="5.500" viewBox="0 0 9 5.500"><path d="M0 0 H9 L4.500 5.500 Z" fill="#111"/></svg></div>
<div class="cb" style="left:1233px;top:504px"></div>
<div class="t" style="left:1252px;top:504px">Compact GUI</div>
<div class="cb" style="left:1233px;top:524px"><svg style="left:1px;top:1px" width="10" height="10" viewBox="0 0 10 10"><path d="M.8 5.200 L4 8.300 L9.300 2.200" fill="none" stroke="#000" stroke-width="2.200"/></svg></div>
<div class="t" style="left:1252px;top:524px">Detect masters from path</div>
<div class="cb" style="left:1233px;top:544px"><svg style="left:1px;top:1px" width="10" height="10" viewBox="0 0 10 10"><path d="M.8 5.200 L4 8.300 L9.300 2.200" fill="none" stroke="#000" stroke-width="2.200"/></svg></div>
<div class="t" style="left:1252px;top:544px">Generate rejection maps</div>
<div class="cb" style="left:1233px;top:564px"></div>
<div class="t" style="left:1252px;top:564px">Preserve white balance</div>
<div class="cb" style="left:1233px;top:584px"><svg style="left:1px;top:1px" width="10" height="10" viewBox="0 0 10 10"><path d="M.8 5.200 L4 8.300 L9.300 2.200" fill="none" stroke="#000" stroke-width="2.200"/></svg></div>
<div class="t" style="left:1252px;top:584px">Save groups on exit</div>
<div class="cb" style="left:1233px;top:604px"></div>
<div class="t" style="left:1252px;top:604px">Smart naming override</div>
<div class="btn" style="left:1233px;top:624px;width:203px;height:21px"><div class="t" style="left:0;width:201px;text-align:center;top:2px">Purge cache (366.88 KiB)</div></div>
<div class="grp" style="left:1227px;top:659px;width:215px;height:83px"><div class="grph" style="height:17px"></div></div>
<div class="t blue" style="left:1234px;top:660px">Registration Reference Image</div>
<div class="t" style="left:1233px;top:693px">Mode:</div>
<div class="combo" style="left:1273px;top:690px;width:141px;height:20px"><div class="t" style="left:5px;top:2px">auto</div><div class="a" style="left:122px;top:1px;width:1px;height:16px;background:#9a9aa0"></div><svg style="left:126px;top:6.5px" width="9" height="5.500" viewBox="0 0 9 5.500"><path d="M0 0 H9 L4.500 5.500 Z" fill="#111"/></svg></div>
<div class="a" style="left:1233px;top:716px;width:181px;height:20px;border:1px solid #9a9aa0;background:#d4d4d8"><div class="t" style="left:5px;top:2px;color:#8a8a90">auto</div></div>
<svg class="a" style="left:1420px;top:721px" width="11" height="10" viewBox="0 0 11 10"><path d="M0 1 Q0 0 1 0 H4 L5 1.500 H10 Q11 1.500 11 2.500 V9 Q11 10 10 10 H1 Q0 10 0 9 Z" fill="#8e8e8e"/><path d="M0 3.300 H11" stroke="#d9d9e3" stroke-width=".8"/></svg>
<div class="grp" style="left:1227px;top:750px;width:215px;height:57px"><div class="grph" style="height:17px"></div></div>
<div class="t blue" style="left:1234px;top:751px">Output Directory</div>
<div class="inp" style="left:1233px;top:781px;width:181px;height:20px"><div class="t" style="left:2.5px;top:2px">:uments/Processats/Processat1</div></div>
<svg class="a" style="left:1420px;top:786px" width="11" height="10" viewBox="0 0 11 10"><path d="M0 1 Q0 0 1 0 H4 L5 1.500 H10 Q11 1.500 11 2.500 V9 Q11 10 10 10 H1 Q0 10 0 9 Z" fill="#3c3c3c"/><path d="M0 3.300 H11" stroke="#d9d9e3" stroke-width=".8"/></svg>
<div class="a" id="taskbar">
<svg style="left:0;top:0" width="26" height="32" viewBox="0 0 26 32" fill="#ececec"><path d="M23 8.800 L16.800 9.200 Q13.800 8 12.600 10.600 Q16 14 14.300 18.800 Q12.800 22.500 9.300 25.300 L8.800 28 Q14.500 25.500 16.800 20.500 Q19 15.500 17.300 11.200 Z"/><path d="M12.500 12.500 Q7 7 1.800 7.200 Q3.500 12.500 12 15 Z"/><path d="M12 15.200 Q6 13.200 2 15.200 Q5 19.500 12.500 17.800 Z" opacity=".9"/><path d="M12.600 18 Q8 18.500 4.500 21.800 Q9 22.500 13 19.800 Z" opacity=".85"/></svg>
<div class="a" style="left:30px;top:7px;width:20px;height:18px;background:#4a90e2;border-top:1px solid #1c3c60"></div><div class="a" style="left:35px;top:23px;width:10px;height:2px;background:#1c4a84"></div>
<div class="a" style="left:54px;top:0;width:25px;height:32px;background:#160303"></div>
<div class="a" style="left:79px;top:0;width:25px;height:32px;background:#5c0808"></div>
<div class="t" style="left:62px;top:5px;font-size:15px;line-height:20px;height:20px;color:#ececec">1</div>
<div class="t" style="left:86px;top:5px;font-size:15px;line-height:20px;height:20px;color:#ececec"><b>2</b></div>
<svg style="left:109px;top:6px" width="20" height="20" viewBox="0 0 20 20"><rect x="3" y="0" width="14" height="3" rx="1" fill="#4a90e0"/><rect x="2" y="2" width="16" height="3" rx="1" fill="#58b060"/><rect x="1" y="4" width="18" height="3" rx="1" fill="#e8c850"/><rect x="0" y="6.500" width="20" height="13.500" rx="1.500" fill="#8c8c88"/><rect x="7" y="12" width="6" height="2" fill="#fff"/></svg>
<svg style="left:139.5px;top:7px" width="20.500" height="19" viewBox="0 0 22 19" preserveAspectRatio="none"><rect width="22" height="19" rx="1.500" fill="#484846"/><path d="M3.500 5 L7.500 8 L3.500 11" fill="none" stroke="#fff" stroke-width="1.800"/><path d="M9.500 11.500 H15" stroke="#fff" stroke-width="1.800"/></svg>
<svg style="left:171px;top:6px" width="20" height="21" viewBox="0 0 22 21" preserveAspectRatio="none"><rect x="0" y="0" width="22" height="21" fill="#e2e2e2"/><rect x="0" y="17.500" width="22" height="3.500" fill="#b2b2b2"/><path d="M4.500 15.500 C5 9 9 3.500 18.500 2.500 C17.500 9 13 13 6.500 13.500 Z" fill="#4f7db4"/><path d="M3.500 16.500 L11 8" stroke="#3c6496" stroke-width="1"/></svg>
<svg style="left:203px;top:3px" width="24" height="26" viewBox="0 0 24 26"><defs><radialGradient id="ffg" cx=".7" cy=".25" r=".9"><stop offset="0" stop-color="#fff44f"/><stop offset=".35" stop-color="#ff980e"/><stop offset=".75" stop-color="#ff3647"/><stop offset="1" stop-color="#e31587"/></radialGradient></defs><path d="M16 1 C20 3.500 23 8 22.500 14 C22 20.500 17.500 25 12 25 C6 25 1.500 20.500 1.500 14.500 C1.500 11 3 8 4 7 C4 8.500 4.500 9.500 5.500 10 C6.500 7.500 9 6 11 6 C12.500 4 14 2.500 16 1 Z" fill="url(#ffg)"/><circle cx="12.200" cy="14.500" r="5" fill="#7542e5"/><path d="M7 12 C8.500 10 12 9.500 14 11 C11.500 10.800 9.500 12 9.500 14.500 C8 14.500 7 13.500 7 12 Z" fill="#ffbd4f"/><path d="M16 1 C19 4 19.500 7 18.500 9.500 C17.500 7 15.500 6 13.500 6 C14 4 15 2.500 16 1 Z" fill="#fff44f"/></svg>
<div class="t" style="left:228px;top:5px;font-size:15px;line-height:20px;height:20px;color:#ececec">Processa...</div>
<svg style="left:325px;top:6px" width="20" height="21" viewBox="0 0 22 21" preserveAspectRatio="none"><rect x="0" y="0" width="22" height="21" fill="#e2e2e2"/><rect x="0" y="17.500" width="22" height="3.500" fill="#b2b2b2"/><path d="M4.500 15.500 C5 9 9 3.500 18.500 2.500 C17.500 9 13 13 6.500 13.500 Z" fill="#4f7db4"/><path d="M3.500 16.500 L11 8" stroke="#3c6496" stroke-width="1"/></svg>
<div class="t" style="left:348px;top:5px;font-size:15px;line-height:20px;height:20px;color:#ececec">*Sense tí...</div>
<svg style="left:445px;top:7px" width="20.500" height="19" viewBox="0 0 22 19" preserveAspectRatio="none"><rect width="22" height="19" rx="1.500" fill="#484846"/><path d="M3.500 5 L7.500 8 L3.500 11" fill="none" stroke="#fff" stroke-width="1.800"/><path d="M9.500 11.500 H15" stroke="#fff" stroke-width="1.800"/></svg>
<div class="t" style="left:468.5px;top:5px;font-size:15px;line-height:20px;height:20px;color:#ececec">joan@thi...</div>
<svg style="left:565px;top:7px" width="20.500" height="19" viewBox="0 0 22 19" preserveAspectRatio="none"><rect width="22" height="19" rx="1.500" fill="#484846"/><path d="M3.500 5 L7.500 8 L3.500 11" fill="none" stroke="#fff" stroke-width="1.800"/><path d="M9.500 11.500 H15" stroke="#fff" stroke-width="1.800"/></svg>
<div class="t" style="left:587px;top:5px;font-size:15px;line-height:20px;height:20px;color:#ececec">joan@thi...</div>
<svg style="left:685px;top:7px" width="20.500" height="19" viewBox="0 0 22 19" preserveAspectRatio="none"><rect width="22" height="19" rx="1.500" fill="#484846"/><path d="M3.500 5 L7.500 8 L3.500 11" fill="none" stroke="#fff" stroke-width="1.800"/><path d="M9.500 11.500 H15" stroke="#fff" stroke-width="1.800"/></svg>
<div class="t" style="left:706.5px;top:5px;font-size:15px;line-height:20px;height:20px;color:#ececec">joan@thi...</div>
<svg style="left:805px;top:8px" width="20" height="17" viewBox="0 0 23 19" preserveAspectRatio="none"><path d="M0 2 Q0 0 2 0 H8 L10 2.500 H21 Q23 2.500 23 4.500 V17 Q23 19 21 19 H2 Q0 19 0 17 Z" fill="#3a80d8"/><path d="M0 6 H23 V17 Q23 19 21 19 H2 Q0 19 0 17 Z" fill="#5aa4f0"/></svg>
<div class="t" style="left:828px;top:5px;font-size:15px;line-height:20px;height:20px;color:#ececec">lights bons</div>
<svg style="left:926.8px;top:4.3px" width="15.600" height="21.600" viewBox="0 0 12.200 15.800"><defs><linearGradient id="ptc" x1="0" y1="0" x2="0" y2="1"><stop offset="0.150" stop-color="#0000ff"/><stop offset="1" stop-color="#b8b8f6"/></linearGradient><linearGradient id="plc" x1="0" y1="0" x2="1" y2="0"><stop offset="0.100" stop-color="#0808ff"/><stop offset="1" stop-color="#dcdcfa"/></linearGradient><linearGradient id="prc" x1="0" y1="0" x2="1" y2="0"><stop offset="0" stop-color="#dcdcfa"/><stop offset="0.900" stop-color="#0808ff"/></linearGradient></defs><path d="M0 5.250 L6.100 9 V15.750 L0 10.500 Z" fill="url(#plc)"/><path d="M12.200 5.250 L6.100 9 V15.750 L12.200 10.500 Z" fill="url(#prc)"/><path d="M6.100 0 L12.200 5.250 L6.100 9.300 L0 5.250 Z" fill="url(#ptc)"/></svg>
<div class="t" style="left:948px;top:5px;font-size:15px;line-height:20px;height:20px;color:#ececec">PixInsight</div>
<svg style="left:1045px;top:6px" width="20" height="21" viewBox="0 0 22 21" preserveAspectRatio="none"><rect x="0" y="0" width="22" height="21" fill="#e2e2e2"/><rect x="0" y="17.500" width="22" height="3.500" fill="#b2b2b2"/><path d="M4.500 15.500 C5 9 9 3.500 18.500 2.500 C17.500 9 13 13 6.500 13.500 Z" fill="#4f7db4"/><path d="M3.500 16.500 L11 8" stroke="#3c6496" stroke-width="1"/></svg>
<div class="t" style="left:1068px;top:5px;font-size:15px;line-height:20px;height:20px;color:#ececec">*Sense tí...</div>
<svg style="left:1166px;top:7px" width="20.500" height="19" viewBox="0 0 22 19" preserveAspectRatio="none"><rect width="22" height="19" rx="1.500" fill="#484846"/><path d="M3.500 5 L7.500 8 L3.500 11" fill="none" stroke="#fff" stroke-width="1.800"/><path d="M9.500 11.500 H15" stroke="#fff" stroke-width="1.800"/></svg>
<div class="t" style="left:1188px;top:5px;font-size:15px;line-height:20px;height:20px;color:#ececec">joan@thi...</div>
<div class="t" style="left:1299px;top:5px;font-size:15px;line-height:20px;height:20px;color:#4a4a4a;font-weight:bold">M</div>
<div class="t" style="left:1320px;top:5px;font-size:15px;line-height:20px;height:20px;color:#4a4a4a;font-weight:bold">N</div>
<div class="t" style="left:1340px;top:5px;font-size:15px;line-height:20px;height:20px;color:#4a4a4a;font-weight:bold">D</div>
<div class="t" style="left:1363px;top:5px;font-size:15px;line-height:20px;height:20px;color:#4a4a4a;font-weight:normal">ES</div>
<div class="t" style="left:1288px;top:5px;font-size:15px;line-height:20px;height:20px;color:#e0e0e0;font-weight:bold">M</div>
<div class="t" style="left:1309px;top:5px;font-size:15px;line-height:20px;height:20px;color:#e0e0e0;font-weight:bold">N</div>
<div class="t" style="left:1329px;top:5px;font-size:15px;line-height:20px;height:20px;color:#e0e0e0;font-weight:bold">D</div>
<div class="t" style="left:1352px;top:5px;font-size:15px;line-height:20px;height:20px;color:#ececec">ES</div>
<svg style="left:1384px;top:6px" width="30" height="22" viewBox="0 0 30 22"><g fill="#3c3c3c"><path d="M12 12 L18 7 V10 H23 V14 H18 V17 Z"/><path d="M30 8 L25 3 V6 H21 V10 H25 V13 Z"/></g><path d="M2 12 L8 7 V10 H13 V14 H8 V17 Z" fill="#8a8a8a"/><path d="M21 8 L15 3 V6 H11 V10 H15 V13 Z" fill="#6a6a6a"/><path d="M8.500 15.500 L13 20 M13 15.500 L8.500 20" stroke="#fff" stroke-width="1.600"/></svg>
<svg style="left:1408px;top:3px" width="32" height="27" viewBox="0 0 32 27"><path d="M14 4 H28 V24 H14 Z" fill="#2e2e2e"/><rect x="1" y="3.500" width="15" height="20" rx="1" fill="#fff" stroke="#e8c020" stroke-width="2"/><rect x="5" y="1" width="7" height="4" rx="1" fill="#c8c8c8"/><path d="M6 8 H18 L21 11 V25 H7 Z" fill="#f6f6f6" stroke="#d0d0d0" stroke-width=".6" transform="rotate(-10 13 16)"/></svg>
<svg style="left:1436px;top:6px" width="32" height="22" viewBox="0 0 32 22"><g transform="translate(10 0)"><path d="M10 2 C5 2 4.500 7 4.500 11 C4.500 14 2.500 15 1.500 17 H18.500 C17.500 15 15.500 14 15.500 11 C15.500 7 15 2 10 2 Z" fill="#2c2c2c"/><rect x="7" y="18.500" width="6" height="1.800" fill="#2c2c2c"/></g><path d="M10 2 C5 2 4.500 7 4.500 11 C4.500 14 2.500 15 1.500 17 H18.500 C17.500 15 15.500 14 15.500 11 C15.500 7 15 2 10 2 Z" fill="#f0f0f0"/><rect x="7" y="18.500" width="6" height="1.800" fill="#f0f0f0"/></svg>
<svg style="left:1466px;top:6px" width="28" height="22" viewBox="0 0 28 22"><rect x="11" width="15" height="22" fill="#242424"/><path d="M20 5 L24 10 H16 Z" fill="#3a3a3a"/><rect width="16" height="22" fill="#8a8a8a"/><path d="M8 4.500 L12.500 9.500 H3.500 Z" fill="#cacaca"/><path d="M3.500 11.500 H12.500" stroke="#cacaca" stroke-width="1.200"/></svg>
<svg style="left:1493px;top:5px" width="21" height="21" viewBox="0 0 21 21"><circle cx="10.500" cy="10.500" r="10.500" fill="#e03030"/><path d="M10.500 4 V12" stroke="#fff" stroke-width="2.600"/><circle cx="10.500" cy="16" r="1.600" fill="#fff"/></svg>
<div class="a" style="left:1517px;top:0;width:51px;height:32px;background:#0c0c0c"></div>
<div class="t" style="left:1521px;top:5px;font-size:15px;line-height:20px;height:20px;color:#ececec">12:52</div>
<svg style="left:1573px;top:4px" width="24" height="24" viewBox="0 0 24 24"><circle cx="12" cy="12" r="12" fill="#e83838"/><path d="M8.200 7.500 A6.200 6.200 0 1 0 15.800 7.500" fill="none" stroke="#fff" stroke-width="2"/><path d="M12 4.500 V12" stroke="#fff" stroke-width="2.200"/></svg>
<div class="a" style="left:679px;top:2px;width:115px;height:1.500px;background:#3a0000"></div>
<div class="a" style="left:847px;top:2px;width:69px;height:1.500px;background:#3a0000"></div>
<div class="a" style="left:920px;top:2px;width:115px;height:1.500px;background:#3a0000"></div>
</div>
</body></html>
